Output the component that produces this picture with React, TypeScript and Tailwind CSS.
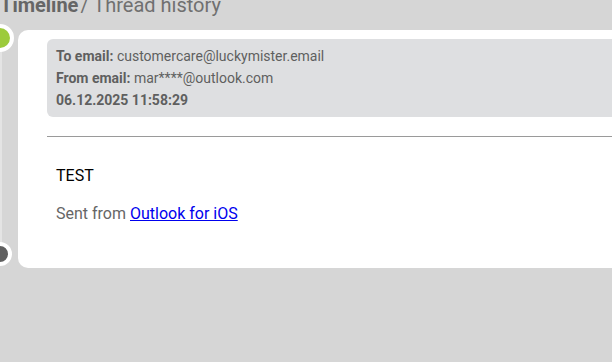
import React from "react";

export default function App() {
  return (
    <div className="min-h-[362px] w-[612px] overflow-hidden bg-[#d6d6d6] font-['Roboto',sans-serif]">
      {/* Page title, scrolled partly off the top */}
      <h1 className="-mt-[8px] h-[38px] pl-0 text-[20px] leading-[26px] text-[#707070]">
        <span className="font-bold text-[#666666]">Timeline</span>
        <span className="ml-[2px]">/ Thread history</span>
      </h1>

      {/* Timeline */}
      <div className="relative">
        <div className="absolute left-0 top-[18px] h-[210px] w-[2px] bg-[#e4e4e4]" />
        <div className="absolute -left-[14px] top-[-6px] h-[28px] w-[28px] rounded-full border-[4px] border-white bg-[#9ccb3b]" />
        <div className="absolute -left-[12px] top-[212px] h-[24px] w-[24px] rounded-full border-[4px] border-white bg-[#5f5f5f]" />

        <div className="ml-[18px] mr-[-20px] h-[238px] rounded-l-[10px] bg-white pl-[29px] pt-[9px]">
          <div className="rounded-l-[6px] bg-[#dedfe1] px-[9px] py-[6px] text-[14px] leading-[22px] text-[#5f5f5f]">
            <div>
              <span className="font-bold">To email:</span> customercare@luckymister.email
            </div>
            <div>
              <span className="font-bold">From email:</span> mar****@outlook.com
            </div>
            <div className="font-bold">06.12.2025 11:58:29</div>
          </div>

          <hr className="mt-[19px] border-t border-[#9a9a9a]" />

          <div className="pl-[9px] pt-[28px] text-[16px] leading-[22px]">
            <p className="text-black">TEST</p>
            <p className="mt-[16px] text-[#666666]">
              Sent from{" "}
              <a href="#" className="text-[#0000ee] underline">
                Outlook for iOS
              </a>
            </p>
          </div>
        </div>
      </div>
    </div>
  );
}
